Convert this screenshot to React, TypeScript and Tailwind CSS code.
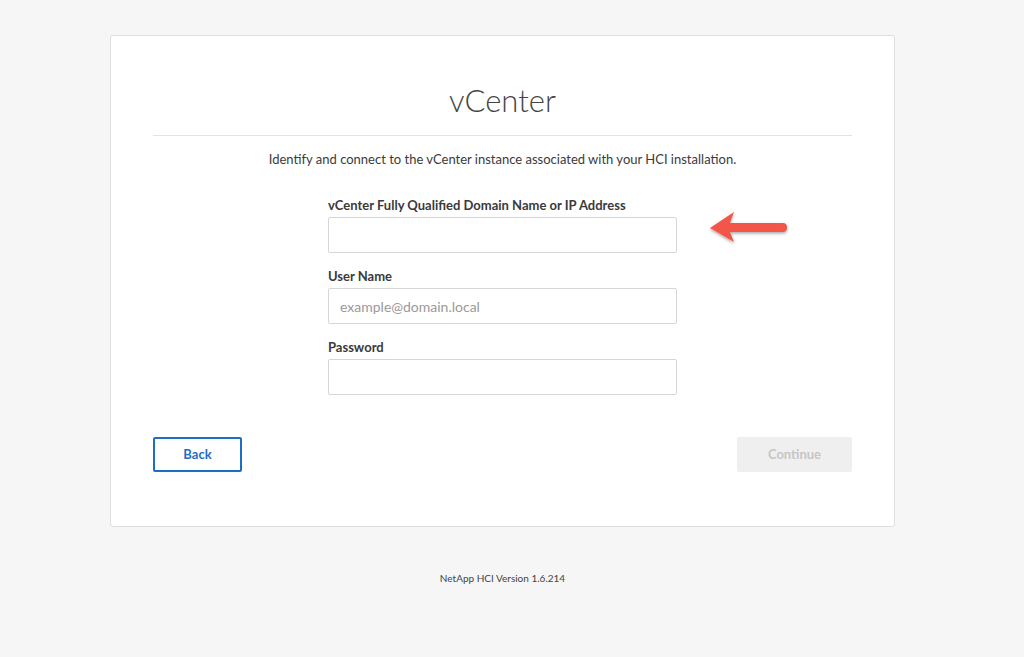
import React from "react";

function Field({ label, placeholder, type = "text" }: { label: string; placeholder?: string; type?: string }) {
  return (
    <div className="flex flex-col">
      <label className="text-[13px] font-bold text-[#3a3a3a] leading-4 mb-1">{label}</label>
      <input
        type={type}
        placeholder={placeholder}
        className="h-9 w-full border border-[#d6d6d6] rounded-[2px] bg-white px-[11px] text-[14px] text-[#333] placeholder:text-[#9a9a9a] outline-none"
      />
    </div>
  );
}

function Arrow() {
  return (
    <svg className="absolute left-[706px] top-[208px]" width="90" height="42" viewBox="0 0 90 42">
      <defs>
        <filter id="sh" x="-20%" y="-40%" width="140%" height="180%">
          <feDropShadow dx="0" dy="1.5" stdDeviation="1.5" floodColor="#000" floodOpacity="0.35" />
        </filter>
      </defs>
      <g filter="url(#sh)">
        <path d="M4 20 L28 4 L24 15 L77 15 Q81 15 81 19.5 Q81 24 77 24 L24 24 L28 34 Z" fill="#f45548" />
      </g>
    </svg>
  );
}

export default function App() {
  return (
    <div className="relative w-full h-[657px] bg-[#f6f6f6] overflow-hidden" style={{ fontFamily: "Lato, 'Open Sans', sans-serif" }}>
      <div className="pt-[35px] pl-[110px]">
        <div className="w-[785px] h-[492px] bg-white border border-[#dedede] rounded-[3px] px-[42px] pt-[44px]">
          <h1 className="text-center text-[31px] font-light text-[#444] leading-10">vCenter</h1>
          <div className="mt-[15px] border-t border-[#e3e3e3]" />
          <p className="mt-[15px] text-center text-[13px] text-[#3b3b3b] leading-4">
            Identify and connect to the vCenter instance associated with your HCI installation.
          </p>
          <div className="mx-auto mt-[30px] w-[349px] flex flex-col gap-[15px]">
            <Field label="vCenter Fully Qualified Domain Name or IP Address" />
            <Field label="User Name" placeholder="example@domain.local" />
            <Field label="Password" type="password" />
          </div>
          <div className="mt-[42px] flex justify-between">
            <button className="w-[89px] h-[35px] border-2 border-[#1e6fc2] rounded-[2px] text-[#1e6fc2] text-[13px] font-bold bg-white">
              Back
            </button>
            <button className="w-[115px] h-[35px] bg-[#efefef] rounded-[2px] text-[#c6c6c6] text-[13px] font-bold">
              Continue
            </button>
          </div>
        </div>
      </div>
      <p className="mt-[45px] pl-[110px] w-[895px] text-center text-[10px] text-[#444] leading-3">NetApp HCI Version 1.6.214</p>
      <Arrow />
    </div>
  );
}
